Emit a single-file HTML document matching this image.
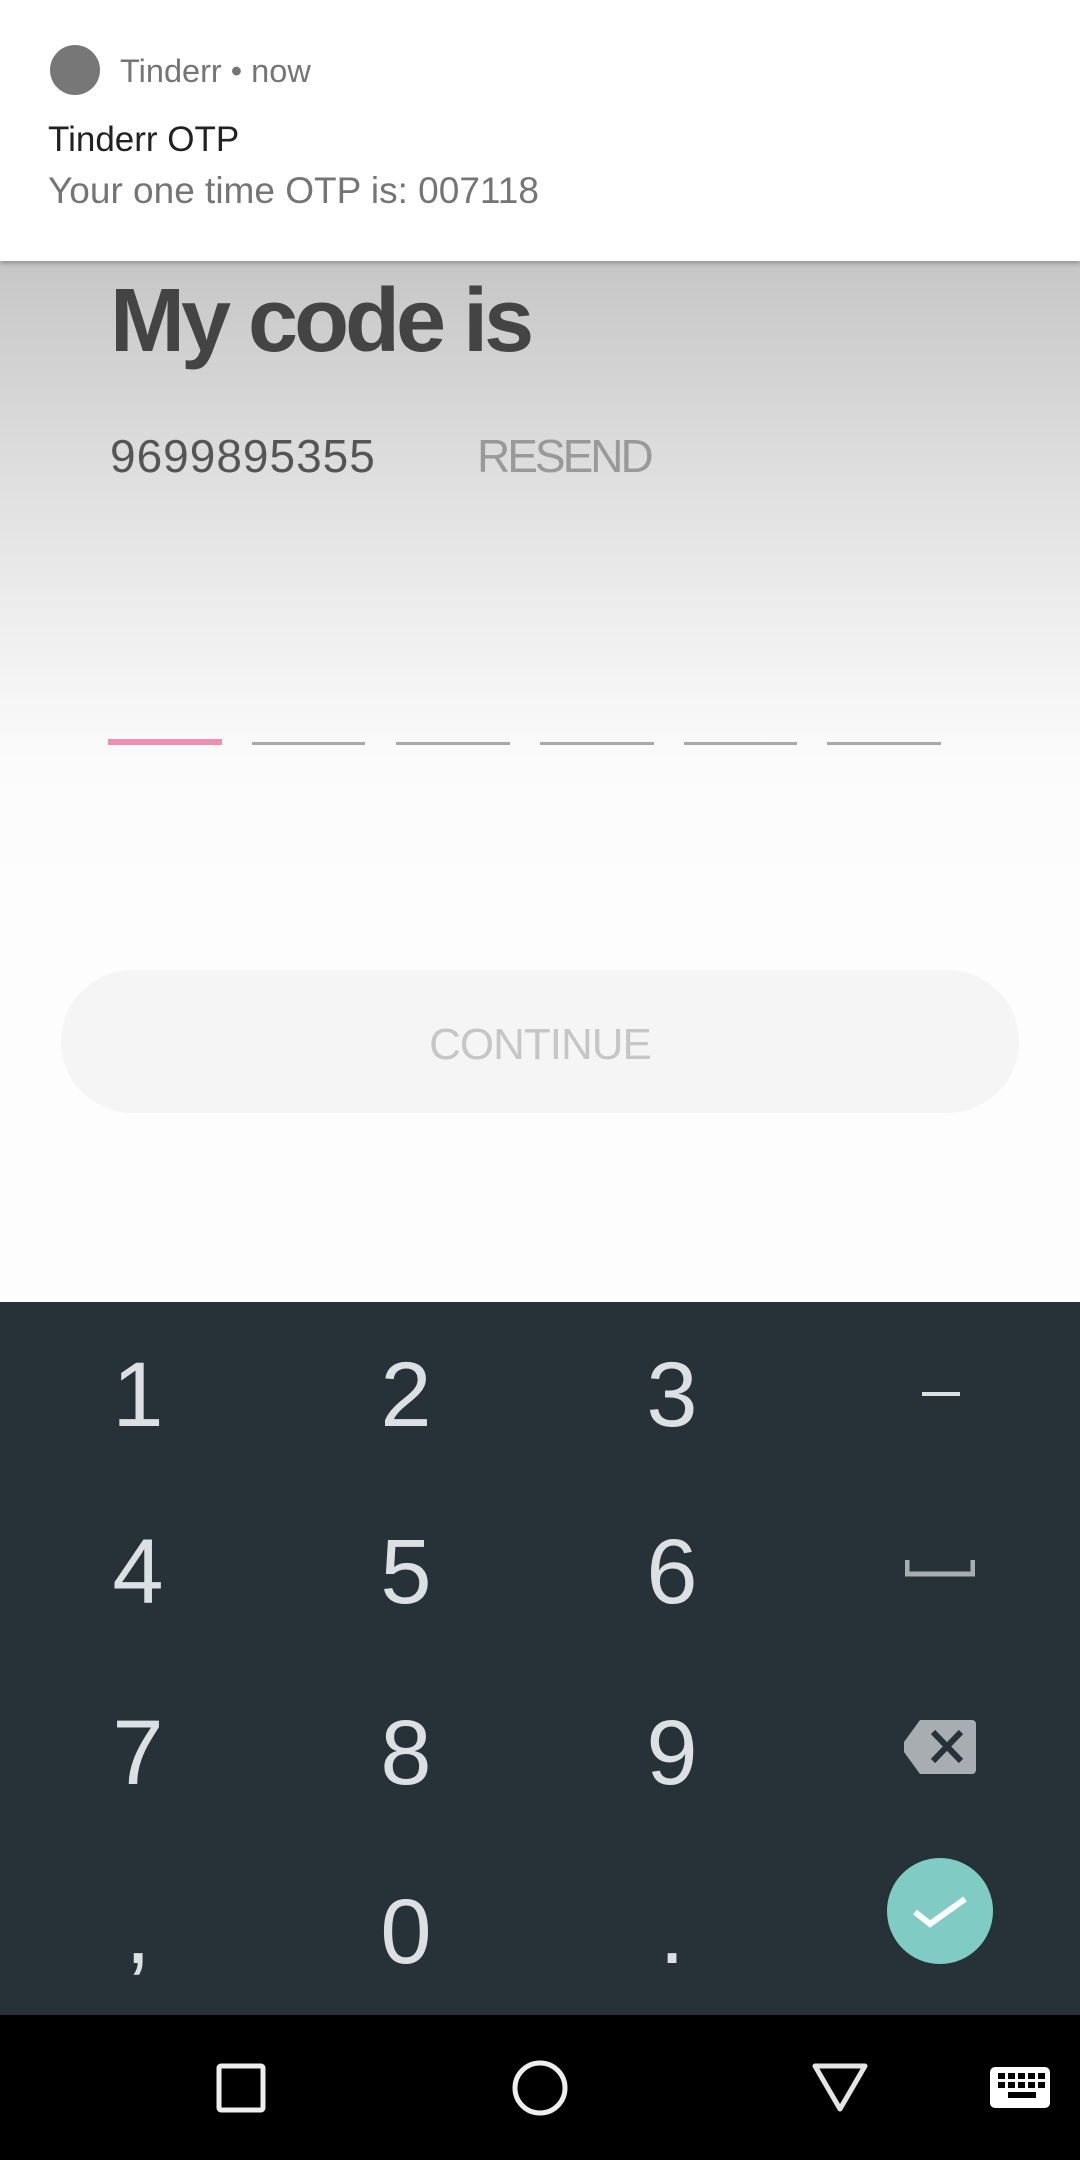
<!DOCTYPE html>
<html><head><meta charset="utf-8"><style>
*{margin:0;padding:0;box-sizing:border-box}
body{width:1080px;height:2160px;position:relative;overflow:hidden;font-family:"Liberation Sans",sans-serif;background:#fdfdfd}
.a{position:absolute;white-space:nowrap;line-height:1}
.bg{position:absolute;left:0;top:0;width:1080px;height:1302px;background:linear-gradient(#c6c6c6 261px,#dcdcdc 450px,#eeeeee 620px,#fbfbfb 760px,#fdfdfd 900px)}
.notif{position:absolute;left:0;top:0;width:1080px;height:261px;background:#fff;box-shadow:0 2px 5px rgba(0,0,0,.3)}
.ul{position:absolute;height:3px;background:#a8a8a8;top:742px}
.kb{position:absolute;left:0;top:1302px;width:1080px;height:713px;background:#263238}
.k{position:absolute;width:200px;text-align:center;font-size:92px;color:#dde0e2;line-height:1}
.nav{position:absolute;left:0;top:2015px;width:1080px;height:145px;background:#000}
</style></head><body>
<div class="bg"></div>
<div class="a" style="left:110px;top:276px;font-size:90px;font-weight:bold;color:#444;letter-spacing:-4px">My code is</div>
<div class="a" style="left:110px;top:433px;font-size:46px;color:#555;letter-spacing:1px">9699895355</div>
<div class="a" style="left:477px;top:433px;font-size:46px;color:#999;letter-spacing:-3px">RESEND</div>
<div class="ul" style="left:108px;width:114px;top:739px;height:6px;background:#f08db3"></div>
<div class="ul" style="left:252px;width:113px"></div>
<div class="ul" style="left:396px;width:114px"></div>
<div class="ul" style="left:540px;width:114px"></div>
<div class="ul" style="left:684px;width:113px"></div>
<div class="ul" style="left:827px;width:114px"></div>
<div style="position:absolute;left:61px;top:970px;width:958px;height:143px;border-radius:72px;background:#f5f5f5"></div>
<div class="a" style="left:61px;width:958px;text-align:center;top:1023px;font-size:44px;color:#c6c6c6;letter-spacing:-1px">CONTINUE</div>

<div class="notif">
<div style="position:absolute;left:50px;top:45px;width:50px;height:50px;border-radius:50%;background:#777"></div>
<div class="a" style="left:120px;top:55px;font-size:32.5px;color:#757575">Tinderr • now</div>
<div class="a" style="left:48px;top:122px;font-size:35px;color:#212121">Tinderr OTP</div>
<div class="a" style="left:48px;top:172px;font-size:37px;color:#757575">Your one time OTP is: 007118</div>
</div>

<div class="kb"></div>
<div class="k" style="left:38px;top:1349px">1</div>
<div class="k" style="left:306px;top:1349px">2</div>
<div class="k" style="left:572px;top:1349px">3</div>
<div style="position:absolute;left:922px;top:1392px;width:38px;height:4px;background:#dde0e2"></div>
<div class="k" style="left:38px;top:1526px">4</div>
<div class="k" style="left:306px;top:1526px">5</div>
<div class="k" style="left:572px;top:1526px">6</div>
<svg style="position:absolute;left:905px;top:1560px" width="70" height="18"><path d="M2 0V14H68V0" fill="none" stroke="#a7adb0" stroke-width="5"/></svg>
<div class="k" style="left:38px;top:1707px">7</div>
<div class="k" style="left:306px;top:1707px">8</div>
<div class="k" style="left:572px;top:1707px">9</div>
<svg style="position:absolute;left:904px;top:1720px" width="72" height="54"><path d="M16 0H68a4 4 0 0 1 4 4V50a4 4 0 0 1-4 4H16L0 32V22Z" fill="#a7adb0"/><path d="M29 12L57 41M57 12L29 41" stroke="#263238" stroke-width="6"/></svg>
<div class="k" style="left:38px;top:1886px">,</div>
<div class="k" style="left:306px;top:1886px">0</div>
<div class="k" style="left:572px;top:1886px">.</div>
<div style="position:absolute;left:887px;top:1858px;width:106px;height:106px;border-radius:50%;background:#80cbc4"></div>
<svg style="position:absolute;left:887px;top:1858px" width="106" height="106"><path d="M28 54L43 66L78 41" fill="none" stroke="#fff" stroke-width="6"/></svg>

<div class="nav"></div>
<svg style="position:absolute;left:0;top:2015px" width="1080" height="145">
<rect x="219" y="51" width="44" height="44" rx="2" fill="none" stroke="#eee" stroke-width="5"/>
<circle cx="540" cy="73" r="25" fill="none" stroke="#eee" stroke-width="5"/>
<path d="M815 51H865L840 94Z" fill="none" stroke="#e5e5e5" stroke-width="5" stroke-linejoin="round"/>
<rect x="990" y="52" width="60" height="41" rx="5" fill="#fff"/>
<g fill="#000"><rect x="998" y="58" width="7" height="6"/><rect x="1008" y="58" width="7" height="6"/><rect x="1018" y="58" width="7" height="6"/><rect x="1028" y="58" width="7" height="6"/><rect x="1038" y="58" width="7" height="6"/>
<rect x="998" y="67" width="7" height="6"/><rect x="1008" y="67" width="7" height="6"/><rect x="1018" y="67" width="7" height="6"/><rect x="1028" y="67" width="7" height="6"/><rect x="1038" y="67" width="7" height="6"/>
<rect x="1008" y="77" width="28" height="6"/></g>
</svg>
</body></html>
